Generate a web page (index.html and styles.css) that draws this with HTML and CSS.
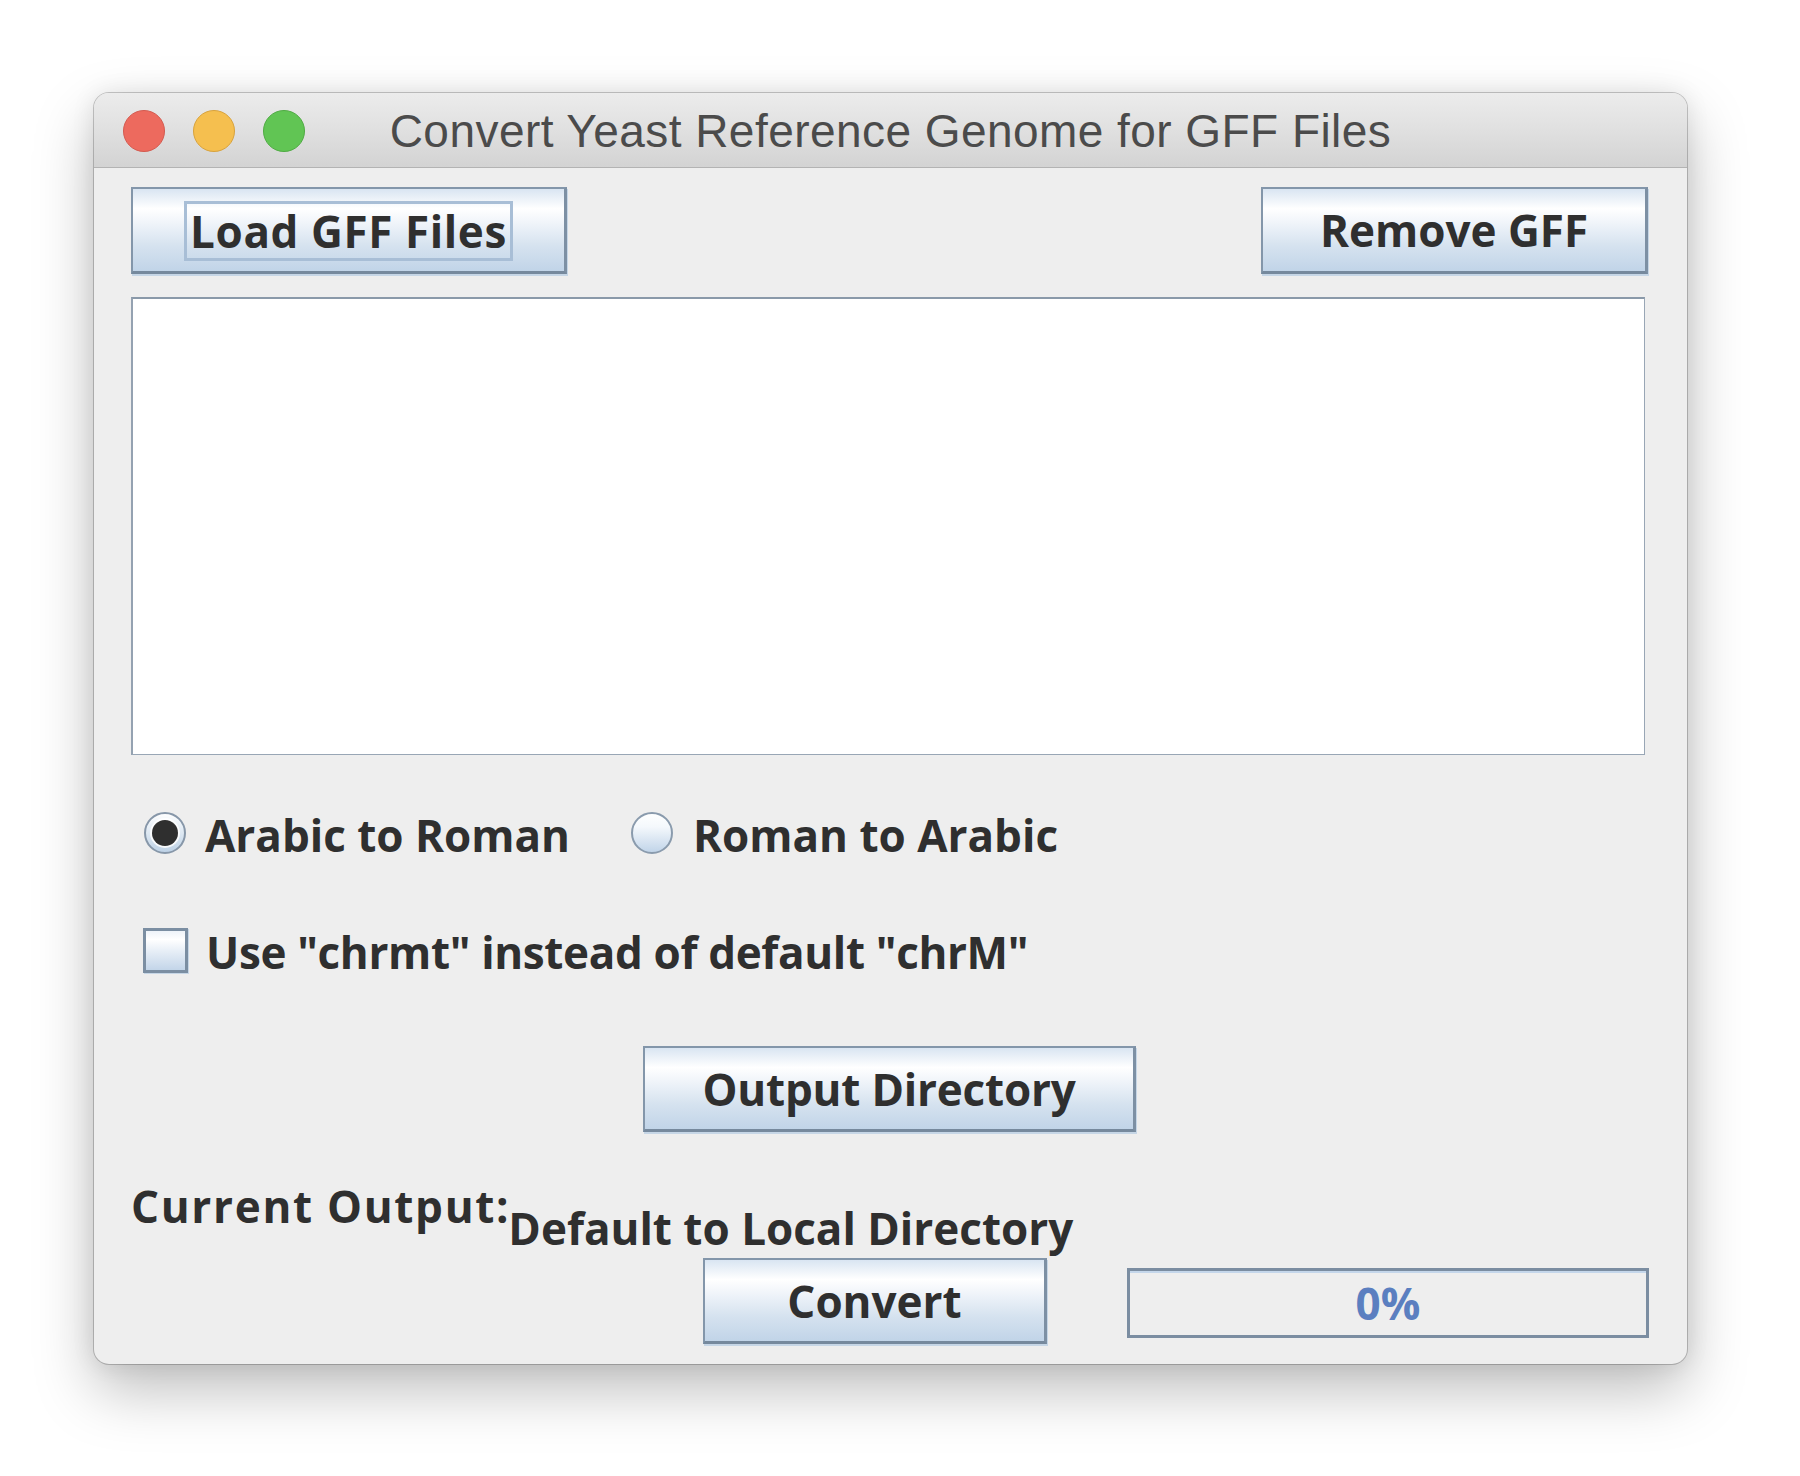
FILE: index.html
```html
<!DOCTYPE html>
<html>
<head>
<meta charset="utf-8">
<title>Convert Yeast Reference Genome for GFF Files</title>
<link rel="stylesheet" href="styles.css">
</head>
<body>
<div class="window">
  <div class="titlebar">
    <div class="lights">
      <span class="light red"></span>
      <span class="light yellow"></span>
      <span class="light green"></span>
    </div>
    <div class="title">Convert Yeast Reference Genome for GFF Files</div>
  </div>
  <div class="content">
    <div class="top-row">
      <button class="btn btn-load"><span class="focus">Load GFF Files</span></button>
      <button class="btn btn-remove">Remove GFF</button>
    </div>
    <div class="list"></div>
    <div class="radios">
      <label class="opt">
        <svg class="radio" width="44" height="44" viewBox="0 0 44 44">
          <defs>
            <linearGradient id="rg1" x1="0" y1="0" x2="0" y2="1">
              <stop offset="0" stop-color="#ffffff"/>
              <stop offset="1" stop-color="#bcd1e6"/>
            </linearGradient>
          </defs>
          <circle cx="22" cy="22" r="20" fill="url(#rg1)" stroke="#8797a9" stroke-width="2"/>
          <circle cx="22" cy="22" r="15" fill="#ffffff" opacity="0.85"/>
          <circle cx="22" cy="22" r="13" fill="#2f2f2f"/>
        </svg>
        <span class="opt-text">Arabic to Roman</span>
      </label>
      <label class="opt opt2">
        <svg class="radio" width="44" height="44" viewBox="0 0 44 44">
          <defs>
            <linearGradient id="rg2" x1="0" y1="0" x2="0" y2="1">
              <stop offset="0" stop-color="#ffffff"/>
              <stop offset="0.35" stop-color="#f4f8fc"/>
              <stop offset="1" stop-color="#bfd3e8"/>
            </linearGradient>
          </defs>
          <circle cx="22" cy="22" r="20" fill="url(#rg2)" stroke="#8a9bad" stroke-width="2"/>
        </svg>
        <span class="opt-text">Roman to Arabic</span>
      </label>
    </div>
    <div class="check">
      <span class="box"></span>
      <span class="opt-text check-text">Use "chrmt" instead of default "chrM"</span>
    </div>
    <div class="center-row">
      <button class="btn btn-out">Output Directory</button>
    </div>
    <div class="current">
      <span class="cur-label">Current Output:</span><span class="cur-val">Default to Local Directory</span>
    </div>
    <div class="bottom-row">
      <button class="btn btn-convert">Convert</button>
      <div class="progress">0%</div>
    </div>
  </div>
</div>
</body>
</html>
```
FILE: styles.css
```css
html, body {
  margin: 0;
  padding: 0;
  background: #ffffff;
}

body {
  width: 1800px;
  height: 1476px;
  overflow: hidden;
  font-family: "Open Sans", "DejaVu Sans", sans-serif;
}

.window {
  margin: 93px 0 0 94px;
  width: 1593px;
  height: 1271px;
  border-radius: 15px;
  background: #eeeeee;
  box-shadow: 0 26px 60px rgba(0, 0, 0, 0.26), 0 0 24px rgba(0, 0, 0, 0.09), 0 0 0 1px rgba(0, 0, 0, 0.2);
  display: flex;
  flex-direction: column;
  overflow: hidden;
}

.titlebar {
  height: 74px;
  border-bottom: 1px solid #b3b3b3;
  background: linear-gradient(to bottom, #ececec 0%, #e0e0e0 50%, #d3d3d3 100%);
  display: grid;
  align-items: center;
  flex: none;
}

.lights, .title {
  grid-area: 1 / 1;
}

.lights {
  display: flex;
  gap: 28px;
  margin-left: 29px;
  margin-top: 2px;
}

.light {
  width: 40px;
  height: 40px;
  border-radius: 50%;
  border: 1px solid;
}

.red { background: #ed6a5e; border-color: #d45a4f; }
.yellow { background: #f5bf4f; border-color: #d8a23c; }
.green { background: #61c554; border-color: #4fab43; }

.title {
  justify-self: center;
  font-family: "Liberation Sans", Arial, sans-serif;
  font-size: 46px;
  letter-spacing: 0.45px;
  color: #4b4b4b;
  margin-top: 2px;
}

.content {
  flex: 1;
  display: flex;
  flex-direction: column;
  padding: 19px 39px 0 37px;
  color: #2f2f2f;
  font-size: 44px;
  font-weight: 700;
}

.btn {
  box-sizing: border-box;
  font-family: "Open Sans", "DejaVu Sans", sans-serif;
  font-size: 44px;
  font-weight: 700;
  color: #2f2f2f;
  height: 87px;
  padding: 0;
  margin: 0;
  border: 2px solid #8396aa;
  border-bottom: 3px solid #76899d;
  border-right: 3px solid #7d90a4;
  background: linear-gradient(to bottom, #d9e5f2 0%, #ffffff 24%, #f1f5fa 40%, #d5e2ef 70%, #c1d4e8 100%);
  box-shadow: 1px 2px 0 #c6d6e6;
  display: flex;
  align-items: center;
  justify-content: center;
  line-height: 1;
}

.top-row {
  display: flex;
  justify-content: space-between;
  height: 87px;
  flex: none;
}

.btn-load { width: 436px; }
.btn-remove { width: 387px; }

.focus {
  box-sizing: border-box;
  height: 60px;
  padding: 0 3px;
  border: 3px solid #a8bed6;
  display: inline-flex;
  align-items: center;
  margin-top: 1px;
  letter-spacing: 0.6px;
}

.list {
  margin-top: 23px;
  height: 458px;
  margin-right: 3px;
  box-sizing: border-box;
  background: #ffffff;
  border: 1px solid #98a6b5;
  border-top: 2px solid #8a99a9;
  border-left: 2px solid #94a2b1;
  flex: none;
}

.radios {
  margin-top: 57px;
  height: 42px;
  display: flex;
  align-items: center;
  flex: none;
}

.opt {
  display: flex;
  align-items: center;
  height: 42px;
}

.radio {
  flex: none;
  margin-left: 12px;
  margin-right: 18px;
}

.opt2 .radio {
  margin-left: 60px;
  margin-right: 19px;
}

.opt-text {
  line-height: 42px;
  padding-top: 3px;
  white-space: nowrap;
}

.check {
  margin-top: 74px;
  height: 45px;
  display: flex;
  align-items: center;
  flex: none;
}

.check-text {
  letter-spacing: -0.35px;
}

.box {
  box-sizing: border-box;
  width: 45px;
  height: 45px;
  margin-left: 12px;
  margin-right: 18px;
  border: 3px solid #7b8ea2;
  background: linear-gradient(to bottom, #eef3f9 0%, #ffffff 22%, #e8eff7 50%, #c3d5e9 100%);
  box-shadow: 1px 1px 0 #c6d6e6;
  flex: none;
}

.center-row {
  margin-top: 73px;
  display: flex;
  justify-content: center;
  flex: none;
}

.btn-out {
  width: 493px;
  height: 86px;
  letter-spacing: -0.2px;
}

.current {
  margin-top: 44px;
  height: 82px;
  display: flex;
  align-items: flex-start;
  white-space: nowrap;
  flex: none;
}

.cur-label, .cur-val {
  line-height: normal;
}

.cur-label {
  letter-spacing: 1.7px;
}

.cur-val {
  margin-top: 22px;
  margin-left: -2px;
}

.bottom-row {
  height: 86px;
  display: flex;
  justify-content: flex-end;
  align-items: center;
  flex: none;
  margin-right: -1px;
}

.btn-convert {
  width: 344px;
  height: 86px;
  margin-right: 80px;
}

.progress {
  box-sizing: border-box;
  width: 522px;
  height: 70px;
  margin-top: 4px;
  border: 3px solid #7b8da1;
  box-shadow: inset 0 2px 0 #c4d6ea;
  display: flex;
  align-items: center;
  justify-content: center;
  color: #5b7fc0;
  line-height: 1;
}
```
